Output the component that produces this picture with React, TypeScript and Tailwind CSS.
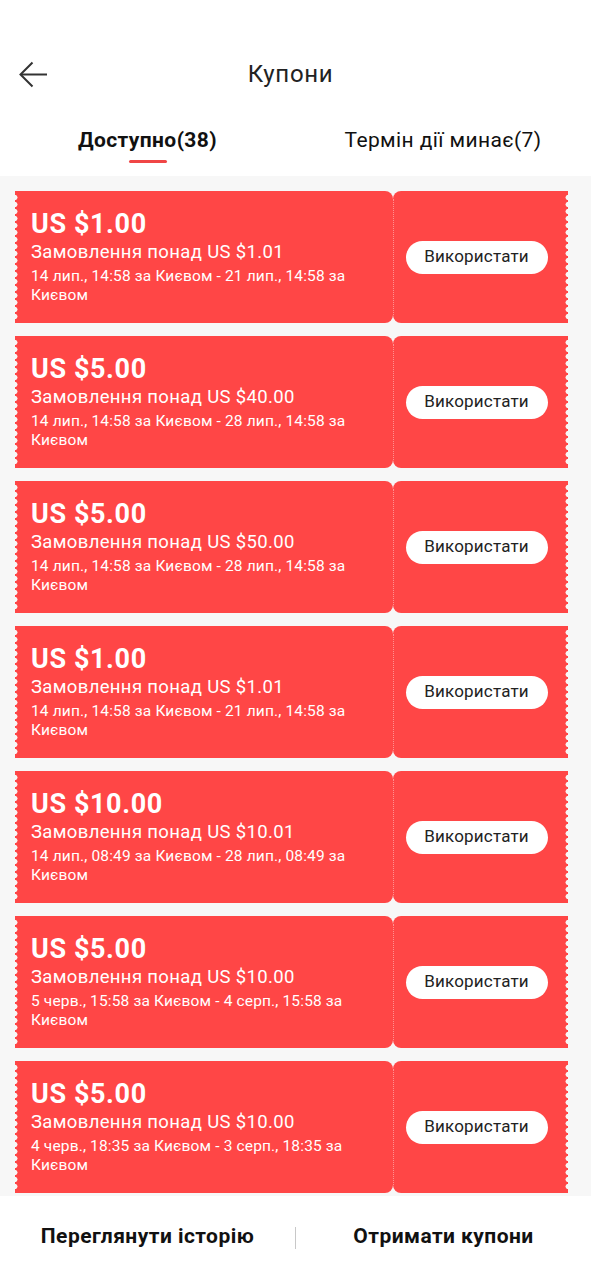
import React from 'react';

type Coupon = {
  amount: string;
  min: string;
  period: string;
};

const coupons: Coupon[] = [
  { amount: 'US $1.00', min: 'Замовлення понад US $1.01', period: '14 лип., 14:58 за Києвом - 21 лип., 14:58 за Києвом' },
  { amount: 'US $5.00', min: 'Замовлення понад US $40.00', period: '14 лип., 14:58 за Києвом - 28 лип., 14:58 за Києвом' },
  { amount: 'US $5.00', min: 'Замовлення понад US $50.00', period: '14 лип., 14:58 за Києвом - 28 лип., 14:58 за Києвом' },
  { amount: 'US $1.00', min: 'Замовлення понад US $1.01', period: '14 лип., 14:58 за Києвом - 21 лип., 14:58 за Києвом' },
  { amount: 'US $10.00', min: 'Замовлення понад US $10.01', period: '14 лип., 08:49 за Києвом - 28 лип., 08:49 за Києвом' },
  { amount: 'US $5.00', min: 'Замовлення понад US $10.00', period: '5 черв., 15:58 за Києвом - 4 серп., 15:58 за Києвом' },
  { amount: 'US $5.00', min: 'Замовлення понад US $10.00', period: '4 черв., 18:35 за Києвом - 3 серп., 18:35 за Києвом' },
];

const CouponCard: React.FC<{ coupon: Coupon }> = ({ coupon }) => (
  <div className="flex h-[132px] ml-[15px] mr-[23px]">
    <div className="relative flex-1 bg-[#ff4646] rounded-r-[8px] pl-4 pr-4 pt-[17px] text-white">
      <div className="absolute left-0 top-[3px] bottom-[3px] w-[3px] bg-[radial-gradient(circle_at_0_50%,#f7f7f7_2.2px,transparent_2.8px)] bg-[length:3px_7px] bg-repeat-y" />
      <div className="text-[27px] leading-[32px] font-bold tracking-[0.6px]">{coupon.amount}</div>
      <div className="text-[18.5px] leading-[24px] tracking-[0.35px]">{coupon.min}</div>
      <div className="mt-[3px] text-[15.5px] leading-[19px] tracking-[0.15px]">{coupon.period}</div>
    </div>
    <div className="relative w-[175px] bg-[#ff4646] rounded-l-[8px] flex items-center justify-center pr-[8px]">
      <div className="absolute left-0 top-[8px] bottom-[8px] border-l border-dotted border-white/40" />
      <div className="absolute right-0 top-[3px] bottom-[3px] w-[3px] bg-[radial-gradient(circle_at_100%_50%,#f7f7f7_2.2px,transparent_2.8px)] bg-[length:3px_7px] bg-repeat-y" />
      <button className="h-[33px] w-[142px] rounded-full bg-white text-[17px] tracking-[0.2px] text-[#222]">
        Використати
      </button>
    </div>
  </div>
);

const App: React.FC = () => {
  return (
    <div className="w-[591px] h-[1280px] flex flex-col bg-[#f7f7f7] overflow-hidden font-['Roboto','Liberation_Sans',sans-serif]">
      <div className="h-[110px] shrink-0 bg-white relative">
        <svg className="absolute left-[18px] top-[60px]" width="30" height="30" viewBox="0 0 30 30" fill="none">
          <path d="M29 14.5H3" stroke="#333" strokeWidth="2" />
          <path d="M14.5 2.5L2.5 14.5L14.5 26.5" stroke="#333" strokeWidth="2" />
        </svg>
        <div className="absolute left-0 right-[10px] top-[59px] text-center text-[24px] leading-[30px] tracking-[0.7px] text-[#222]">Купони</div>
      </div>
      <div className="h-[66px] shrink-0 bg-white flex">
        <div className="w-[295px] flex flex-col items-center pt-[17px]">
          <div className="text-[21px] leading-[26px] font-bold tracking-[0.4px] text-[#111]">Доступно(38)</div>
          <div className="mt-[7px] h-[3px] w-[38px] bg-[#f04646] rounded-full" />
        </div>
        <div className="flex-1 flex justify-center pt-[17px]">
          <div className="text-[21px] leading-[26px] tracking-[0.4px] text-[#111]">Термін дії минає(7)</div>
        </div>
      </div>
      <div className="flex-1 flex flex-col gap-[13px] pt-[15px]">
        {coupons.map((c, i) => (
          <CouponCard key={i} coupon={c} />
        ))}
      </div>
      <div className="h-[84px] shrink-0 bg-white flex items-center">
        <div className="w-[295px] text-center text-[21px] font-bold tracking-[0.45px] text-[#111] pb-[2px]">Переглянути історію</div>
        <div className="h-[22px] w-px bg-[#c8c8c8]" />
        <div className="flex-1 text-center text-[21px] font-bold tracking-[0.45px] text-[#111] pb-[2px]">Отримати купони</div>
      </div>
    </div>
  );
};

export default App;
